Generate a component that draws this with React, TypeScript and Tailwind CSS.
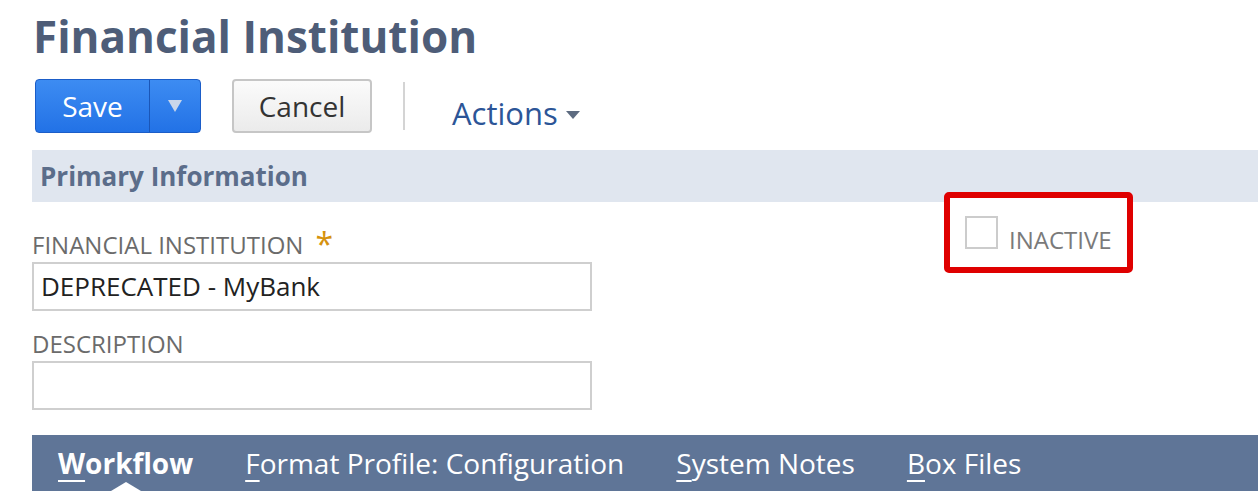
import { useState } from "react";

const tabs = [
  { key: "W", rest: "orkflow", active: true },
  { key: "F", rest: "ormat Profile: Configuration", active: false },
  { key: "S", rest: "ystem Notes", active: false },
  { key: "B", rest: "ox Files", active: false },
];

const App = () => {
  const [inactive, setInactive] = useState(false);

  return (
    <div
      className="h-[500px] w-[1258px] overflow-hidden bg-white"
      style={{ fontFamily: '"Open Sans", "Noto Sans", sans-serif' }}
    >
      <div className="pl-[32px]">
        <h1 className="pl-[1px] pt-[8px] text-[44px] font-bold leading-[56px] text-[#4e5d78]">
          Financial Institution
        </h1>

        <div className="mt-[15px] flex h-[54px] items-center">
          <div className="ml-[3px] flex h-[54px] w-[166px] overflow-hidden rounded-[4px] border border-[#1b5dc8] bg-gradient-to-b from-[#3d8cf2] to-[#2272e6]">
            <button className="flex w-[113px] items-center justify-center text-[28px] leading-[40px] text-white">
              Save
            </button>
            <div className="flex flex-1 items-center justify-center border-l border-[#1a56b8]">
              <span className="block h-0 w-0 border-x-[7px] border-t-[12px] border-x-transparent border-t-[#c9d6ea]" />
            </div>
          </div>
          <button className="ml-[31px] h-[54px] w-[140px] rounded-[4px] border-2 border-[#c6c6c6] bg-gradient-to-b from-[#fbfbfb] to-[#ebebeb] text-[28px] leading-[40px] text-[#333]">
            Cancel
          </button>
          <div className="ml-[31px] h-[48px] w-[2px] bg-[#d4d4d4]" />
          <div className="ml-[47px] mt-[14px] flex items-center gap-[8px] text-[31px] leading-[40px] text-[#2c5597]">
            Actions
            <span className="mt-[4px] block h-0 w-0 border-x-[7px] border-t-[8px] border-x-transparent border-t-[#5d6b80]" />
          </div>
        </div>

        <div className="mt-[17px] flex h-[52px] items-center bg-[#e0e6ef] pl-[8px] text-[26px] font-bold text-[#5b6d8a]">
          Primary Information
        </div>

        <div className="flex">
          <div className="w-[560px]">
            <div className="mt-[27px] flex items-start text-[24px] leading-[32px] text-[#6b6b6b]">
              FINANCIAL INSTITUTION
              <span className="ml-[12px] text-[32px] leading-[30px] text-[#d6920e]">*</span>
            </div>
            <div className="mt-[1px] flex h-[49px] items-center border-2 border-[#cfcfcf] pl-[7px] text-[26px] text-[#222]">
              DEPRECATED - MyBank
            </div>
            <div className="mt-[17px] text-[24px] leading-[32px] text-[#6b6b6b]">DESCRIPTION</div>
            <div className="mt-[1px] h-[49px] border-2 border-[#cfcfcf]" />
          </div>

          <div className="ml-[352px] mt-[-10px] h-[81px]">
            <div className="flex h-[81px] w-[189px] items-start rounded-[5px] border-[6px] border-[#df0000] bg-white pl-[15px] pt-[18px]">
              <button
                onClick={() => setInactive(!inactive)}
                className="h-[33px] w-[33px] border-2 border-[#cccccc] bg-white"
              >
                {inactive && <span className="text-[#555]">✓</span>}
              </button>
              <span className="ml-[11px] mt-[10px] text-[24px] leading-[28px] text-[#7a7a7a]">INACTIVE</span>
            </div>
          </div>
        </div>

        <div className="relative mt-[25px] flex h-[56px] items-center bg-[#5f7597] pl-[26px] text-[28px] leading-[40px] text-white">
          {tabs.map((t) => (
            <div key={t.key} className={`mr-[52px] ${t.active ? "font-bold" : ""}`}>
              <span className="underline decoration-2 underline-offset-[6px]">{t.key}</span>
              {t.rest}
            </div>
          ))}
          <span className="absolute bottom-0 left-[79px] block h-0 w-0 border-x-[15px] border-b-[9px] border-x-transparent border-b-white" />
        </div>
      </div>
    </div>
  );
};

export default App;
